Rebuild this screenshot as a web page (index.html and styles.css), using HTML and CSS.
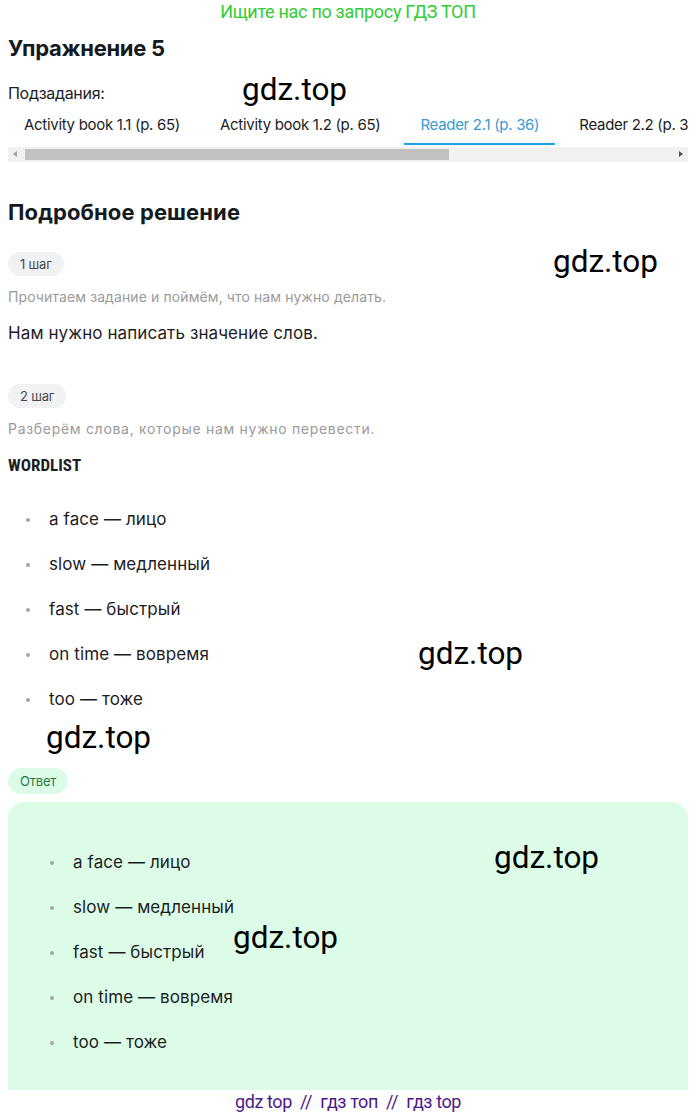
FILE: index.html
```html
<!DOCTYPE html>
<html lang="ru">
<head>
<meta charset="utf-8">
<title>Упражнение 5</title>
<link rel="stylesheet" href="styles.css">
</head>
<body>
<div class="promo">Ищите нас по запросу ГДЗ ТОП</div>
<h1 class="title">Упражнение 5</h1>
<div class="sub-row">
  <span class="sub-label">Подзадания:</span>
  <span class="wm wm-sub">gdz.top</span>
</div>
<div class="tabs">
  <div class="tab-strip">
    <span class="tab">Activity book 1.1 (p. 65)</span>
    <span class="tab">Activity book 1.2 (p. 65)</span>
    <span class="tab active">Reader 2.1 (p. 36)</span>
    <span class="tab">Reader 2.2 (p. 36)</span>
  </div>
  <div class="scrollbar">
    <span class="arrow arrow-left"></span>
    <div class="track"><div class="thumb"></div></div>
    <span class="arrow arrow-right"></span>
  </div>
</div>

<h2 class="section">Подробное решение</h2>

<div class="step-row">
  <span class="pill">1 шаг</span>
  <span class="wm wm-step">gdz.top</span>
</div>
<p class="hint">Прочитаем задание и поймём, что нам нужно делать.</p>
<p class="text">Нам нужно написать значение слов.</p>

<div class="step-row step2">
  <span class="pill">2 шаг</span>
</div>
<p class="hint hint-wide">Разберём слова, которые нам нужно перевести.</p>
<p class="wordlist">WORDLIST</p>
<ul class="list">
  <li>a face — лицо</li>
  <li>slow — медленный</li>
  <li>fast — быстрый</li>
  <li>on time — вовремя<span class="wm wm-list">gdz.top</span></li>
  <li>too — тоже</li>
</ul>
<div class="wm-line"><span class="wm">gdz.top</span></div>

<div class="answer-label"><span class="pill pill-answer">Ответ</span></div>
<div class="answer">
  <ul class="list list-answer">
    <li>a face — лицо<span class="wm wm-a1">gdz.top</span></li>
    <li>slow — медленный</li>
    <li>fast — быстрый<span class="wm wm-a2">gdz.top</span></li>
    <li>on time — вовремя</li>
    <li>too — тоже</li>
  </ul>
</div>
<div class="footer">gdz top &nbsp;//&nbsp; гдз топ &nbsp;//&nbsp; гдз top</div>
</body>
</html>
```

FILE: styles.css
```css
* { box-sizing: border-box; }
html, body { margin: 0; padding: 0; }
body {
  width: 700px;
  padding: 0 12px 0 8px;
  font-family: Inter, "Noto Sans", sans-serif;
  color: #1d1d1f;
  background: #fff;
  overflow: hidden;
}
.promo {
  font-family: Roboto, "Liberation Sans", sans-serif;
  font-size: 18px;
  color: #33cc33;
  text-align: center;
  line-height: 24px;
  letter-spacing: -0.3px;
}
.title {
  margin: 10px 0 0;
  font-size: 22px;
  font-weight: 700;
  line-height: 28px;
  color: #131a22;
  letter-spacing: -0.3px;
}
.wm {
  font-family: Roboto, "Liberation Sans", sans-serif;
  font-size: 31.5px;
  color: #000;
  line-height: 36px;
  font-weight: 400;
  letter-spacing: 0;
}
.sub-row {
  display: flex;
  align-items: center;
  height: 36px;
  margin-top: 13px;
}
.sub-label {
  font-size: 16px;
  width: 234px;
  letter-spacing: -0.3px;
}
.wm-sub { position: relative; top: -3px; }
.tab-strip {
  display: flex;
  white-space: nowrap;
  overflow: hidden;
  gap: 8px;
  height: 34px;
}
.tab {
  padding: 2px 16px 6px;
  font-size: 15px;
  line-height: 24px;
  letter-spacing: -0.3px;
  color: #1d1d1f;
  border-bottom: 2px solid transparent;
}
.tab.active {
  color: #3a9ad3;
  border-bottom-color: #1aa3e8;
}
.scrollbar {
  display: flex;
  align-items: center;
  height: 15px;
  background: #f1f1f1;
  margin-top: 2px;
}
.arrow { width: 15px; height: 15px; position: relative; flex: none; }
.arrow::after {
  content: "";
  position: absolute;
  top: 4px;
  border-top: 3.5px solid transparent;
  border-bottom: 3.5px solid transparent;
}
.arrow-left::after { left: 5px; border-right: 4px solid #a3a3a3; }
.arrow-right::after { left: 6px; border-left: 4px solid #505050; }
.track { flex: 1; height: 15px; padding: 2px 0; }
.thumb { width: 424px; height: 11px; background: #c1c1c1; margin-left: 2px; }

.section {
  margin: 36px 0 0;
  font-size: 22px;
  font-weight: 700;
  line-height: 28px;
  letter-spacing: 0.1px;
  color: #131a22;
}
.step-row {
  display: flex;
  align-items: center;
  justify-content: space-between;
  margin-top: 26px;
  height: 24px;
}
.step-row.step2 { margin-top: 39px; }
.wm-step { margin-right: 30px; position: relative; top: -2px; }
.pill {
  display: inline-block;
  background: #f0f2f4;
  color: #4a4a4a;
  font-size: 13px;
  line-height: 24px;
  height: 24px;
  padding: 0 12px;
  border-radius: 12px;
  letter-spacing: -0.2px;
}
.hint {
  margin: 10px 0 0;
  font-size: 14px;
  line-height: 22px;
  color: #9a9a9a;
  letter-spacing: 0.1px;
}
.hint-wide { letter-spacing: 0.7px; }
.text {
  margin: 13px 0 0;
  font-size: 17px;
  line-height: 24px;
  letter-spacing: 0.1px;
  color: #1d1d1f;
}
.wordlist {
  margin: 14px 0 0;
  font-family: "Liberation Sans Narrow", "Roboto Condensed", "Liberation Sans", sans-serif;
  font-weight: 700;
  font-size: 17px;
  line-height: 22px;
  color: #1d1d1f;
}
.list {
  list-style: none;
  margin: 21px 0 0;
  padding: 0;
}
.list li {
  position: relative;
  padding-left: 41px;
  font-size: 17px;
  line-height: 24px;
  height: 45px;
  padding-top: 10px;
  letter-spacing: 0.1px;
}
.list li::before {
  content: "";
  position: absolute;
  left: 18px;
  top: 21px;
  width: 4px;
  height: 4px;
  border-radius: 50%;
  background: #a5a5a5;
}
.wm-list { position: absolute; left: 410px; top: 4px; }
.wm-line { height: 32px; padding-left: 38px; }
.wm-line .wm { line-height: 32px; }
.answer-label { margin-top: 14px; height: 26px; }
.pill-answer {
  background: #dcfce7;
  color: #237a45;
  height: 26px;
  line-height: 26px;
  border-radius: 13px;
}
.answer {
  margin-top: 8px;
  background: #dcfce8;
  border-radius: 16px 16px 0 0;
  padding: 38px 0 0 24px;
  height: 288px;
}
.list-answer { margin-top: 0; }
.wm-a1 { position: absolute; left: 462px; top: 0; }
.wm-a2 { position: absolute; left: 201px; top: -10px; }
.footer {
  text-align: center;
  font-family: Roboto, "Liberation Sans", sans-serif;
  font-size: 18px;
  line-height: 24px;
  color: #4b1a8a;
  letter-spacing: -0.4px;
}
```
